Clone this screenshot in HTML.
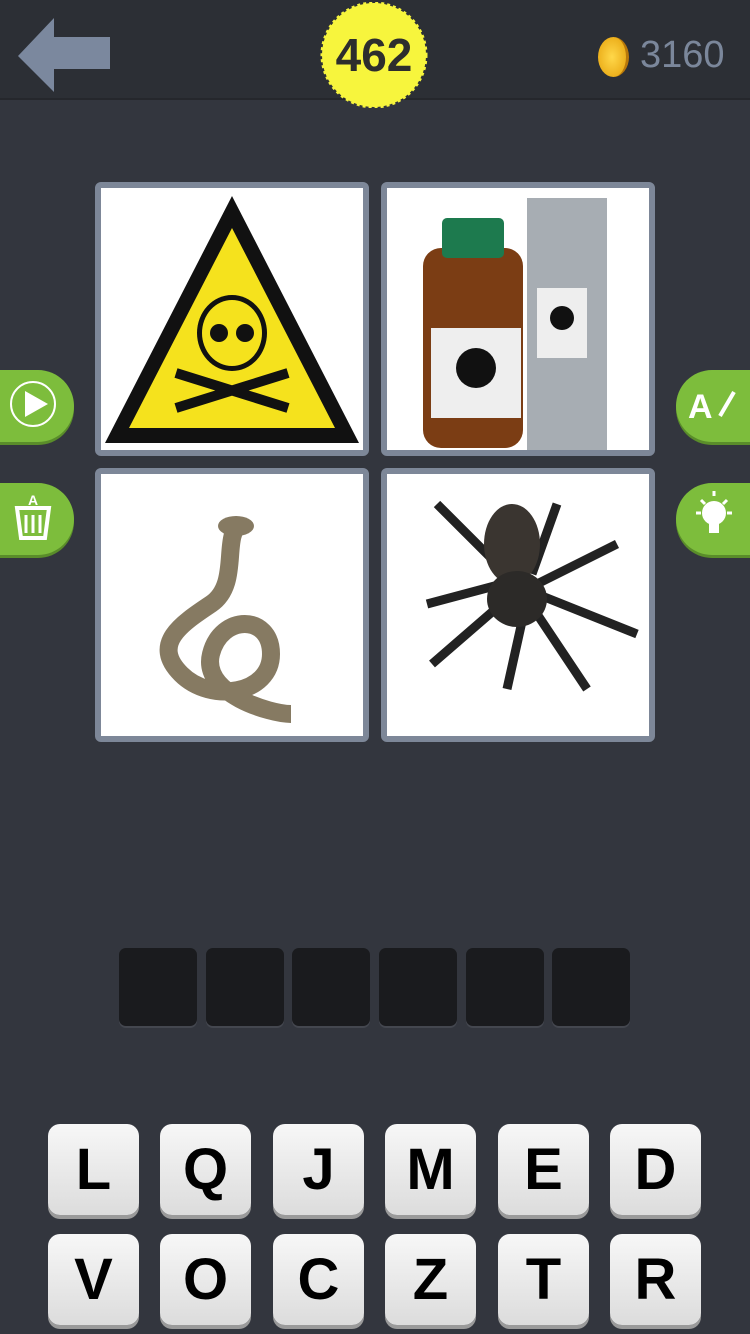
<!DOCTYPE html>
<html><head><meta charset="utf-8"><style>
body{margin:0;width:750px;height:1334px;background:#33363e;position:relative;overflow:hidden;font-family:"Liberation Sans",sans-serif}
.hdr{position:absolute;left:0;top:0;width:750px;height:98px;background:#2c2f35;border-bottom:2px solid #25272c}
.tile{position:absolute;width:262px;height:262px;background:#fff;border:6px solid #7d8798;border-radius:6px;overflow:hidden}
.slot{position:absolute;top:948px;width:78px;height:78px;background:#1a1b1e;border-radius:7px;box-shadow:0 2px 0 #44474f}
.key{position:absolute;width:91px;height:91px;border-radius:12px;background:linear-gradient(#f7f7f7,#dcdcdc);box-shadow:0 4px 0 #9a9a9a;font-weight:bold;font-size:58px;line-height:91px;text-align:center;color:#000}
.gb{position:absolute;width:74px;height:72px;background:#7dbd3c;box-shadow:0 3px 0 #5a8d2a}
</style></head><body>
<div class="hdr"></div>
<svg style="position:absolute;left:18px;top:18px" width="94" height="74"><polygon points="0,38 36,0 36,19 92,19 92,51 36,51 36,74" fill="#7b889e"/></svg>
<svg style="position:absolute;left:320px;top:2px" width="110" height="106"><circle cx="54" cy="53" r="52" fill="#f7f53d" stroke="#f7f53d" stroke-width="3" stroke-dasharray="3 3"/></svg>
<div style="position:absolute;left:320px;top:28px;width:108px;text-align:center;font-size:46px;font-weight:bold;color:#2d2d2d">462</div>
<div style="position:absolute;left:598px;top:37px;width:28px;height:40px;border-radius:50%;background:radial-gradient(#ffd84a,#e5a00a);border-right:3px solid #b8780a"></div>
<div style="position:absolute;left:640px;top:34px;font-size:38px;color:#7b879b">3160</div>

<div class="gb" style="left:0;top:370px;border-radius:0 36px 36px 0"><svg width="74" height="72"><circle cx="33" cy="34" r="22" fill="none" stroke="#fff" stroke-width="2"/><polygon points="25,21 25,47 48,34" fill="#fff"/></svg></div>
<div class="gb" style="left:0;top:483px;border-radius:0 36px 36px 0"><svg width="74" height="72"><path d="M17 25h32l-4 30h-24z" fill="none" stroke="#fff" stroke-width="4"/><path d="M26 32v18M33 32v18M40 32v18" stroke="#fff" stroke-width="3"/><text x="33" y="22" font-size="14" font-weight="bold" fill="#fff" text-anchor="middle" font-family="Liberation Sans">A</text></svg></div>
<div class="gb" style="left:676px;top:370px;border-radius:36px 0 0 36px"><svg width="74" height="72"><text x="12" y="48" font-size="34" font-weight="bold" fill="#fff" font-family="Liberation Sans">A</text><path d="M44 46l14-24" stroke="#fff" stroke-width="4"/></svg></div>
<div class="gb" style="left:676px;top:483px;border-radius:36px 0 0 36px"><svg width="74" height="72"><circle cx="38" cy="30" r="12" fill="#fff"/><rect x="33" y="40" width="10" height="10" fill="#fff"/><path d="M38 8v5M20 30h5M51 30h5M25 17l4 4M51 17l-4 4" stroke="#fff" stroke-width="3"/></svg></div>

<div class="tile" style="left:95px;top:182px"><svg width="262" height="262"><polygon points="131,8 258,255 4,255" fill="#111"/><polygon points="131,40 234,240 28,240" fill="#f5e21d"/><ellipse cx="131" cy="145" rx="35" ry="38" fill="#111"/><ellipse cx="131" cy="145" rx="30" ry="33" fill="#f5e21d"/><path d="M75 185l112 35M187 185l-112 35" stroke="#111" stroke-width="10"/><circle cx="118" cy="145" r="9" fill="#111"/><circle cx="144" cy="145" r="9" fill="#111"/></svg></div>
<div class="tile" style="left:381px;top:182px"><svg width="262" height="262"><rect x="140" y="10" width="80" height="255" fill="#a7adb3"/><rect x="36" y="60" width="100" height="200" rx="18" fill="#7b3d14"/><rect x="55" y="30" width="62" height="40" rx="5" fill="#1d7a4e"/><rect x="44" y="140" width="90" height="90" fill="#eee"/><circle cx="89" cy="180" r="20" fill="#111"/><rect x="150" y="100" width="50" height="70" fill="#eee"/><circle cx="175" cy="130" r="12" fill="#111"/></svg></div>
<div class="tile" style="left:95px;top:468px"><svg width="262" height="262"><path d="M140 50c-20 10 0 60-30 80s-60 40-30 70 90 20 90-20-50-40-60 0 60 60 80 60" fill="none" stroke="#867a62" stroke-width="18"/><ellipse cx="135" cy="52" rx="18" ry="10" fill="#867a62"/></svg></div>
<div class="tile" style="left:381px;top:468px"><svg width="262" height="262"><g stroke="#222" stroke-width="9" fill="none"><path d="M120 100L50 30M115 110L40 130M120 125L45 190M140 125L120 215M145 100L170 30M150 110L230 70M150 120L250 160M140 125L200 215"/></g><ellipse cx="125" cy="70" rx="28" ry="40" fill="#3a3530"/><ellipse cx="130" cy="125" rx="30" ry="28" fill="#2c2a28"/></svg></div>

<div class="slot" style="left:119px"></div><div class="slot" style="left:206px"></div><div class="slot" style="left:292px"></div><div class="slot" style="left:379px"></div><div class="slot" style="left:466px"></div><div class="slot" style="left:552px"></div>

<div class="key" style="left:48px;top:1124px">L</div><div class="key" style="left:160px;top:1124px">Q</div><div class="key" style="left:273px;top:1124px">J</div><div class="key" style="left:385px;top:1124px">M</div><div class="key" style="left:498px;top:1124px">E</div><div class="key" style="left:610px;top:1124px">D</div>
<div class="key" style="left:48px;top:1234px">V</div><div class="key" style="left:160px;top:1234px">O</div><div class="key" style="left:273px;top:1234px">C</div><div class="key" style="left:385px;top:1234px">Z</div><div class="key" style="left:498px;top:1234px">T</div><div class="key" style="left:610px;top:1234px">R</div>
</body></html>
